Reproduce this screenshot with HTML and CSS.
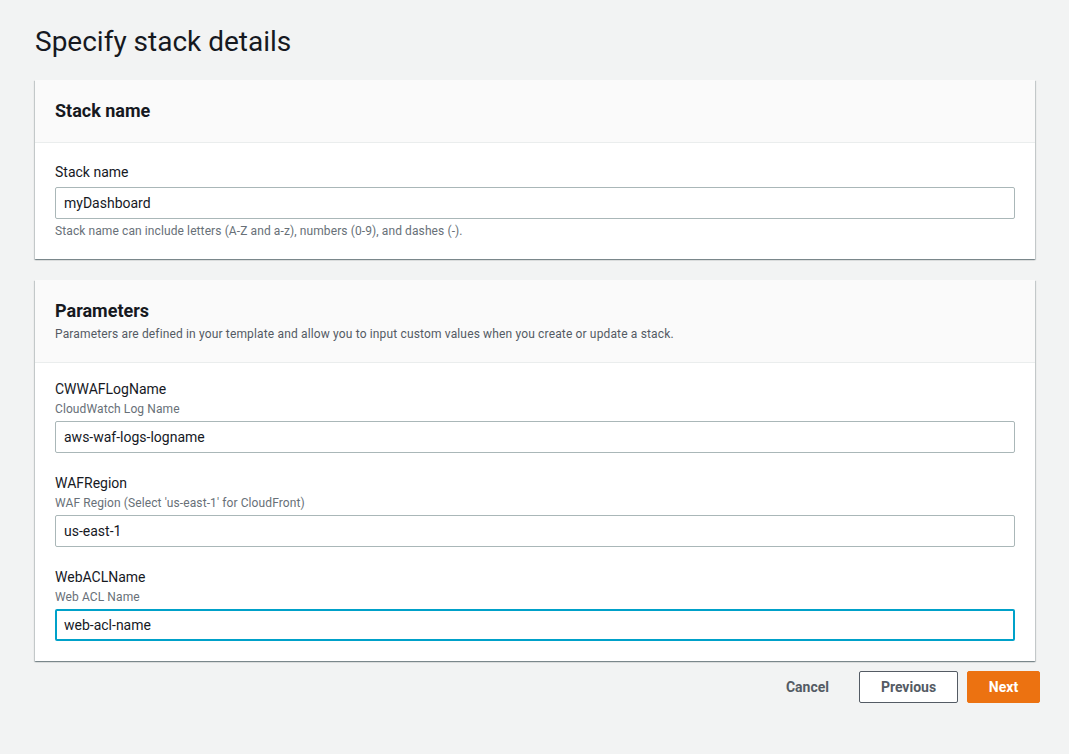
FILE: index.html
```html
<!DOCTYPE html>
<html lang="en">
<head>
<meta charset="utf-8">
<title>Specify stack details</title>
<link rel="stylesheet" href="styles.css">
</head>
<body>
<main class="page">
  <h1 class="page-title">Specify stack details</h1>

  <section class="card">
    <header class="card-header">
      <h2 class="card-title">Stack name</h2>
    </header>
    <div class="card-body">
      <div class="field">
        <label class="field-label" for="stackName">Stack name</label>
        <input class="field-input first" id="stackName" type="text" value="myDashboard">
        <p class="field-hint">Stack name can include letters (A-Z and a-z), numbers (0-9), and dashes (-).</p>
      </div>
    </div>
  </section>

  <section class="card">
    <header class="card-header">
      <h2 class="card-title">Parameters</h2>
      <p class="card-desc">Parameters are defined in your template and allow you to input custom values when you create or update a stack.</p>
    </header>
    <div class="card-body params">
      <div class="field">
        <label class="field-label" for="p1">CWWAFLogName</label>
        <p class="field-desc">CloudWatch Log Name</p>
        <input class="field-input" id="p1" type="text" value="aws-waf-logs-logname">
      </div>
      <div class="field">
        <label class="field-label" for="p2">WAFRegion</label>
        <p class="field-desc">WAF Region (Select 'us-east-1' for CloudFront)</p>
        <input class="field-input" id="p2" type="text" value="us-east-1">
      </div>
      <div class="field">
        <label class="field-label" for="p3">WebACLName</label>
        <p class="field-desc">Web ACL Name</p>
        <input class="field-input is-focused" id="p3" type="text" value="web-acl-name">
      </div>
    </div>
  </section>

  <div class="actions">
    <button class="btn btn-link" type="button">Cancel</button>
    <button class="btn btn-normal" type="button">Previous</button>
    <button class="btn btn-primary" type="button">Next</button>
  </div>
</main>
</body>
</html>
```

FILE: styles.css
```css
* { box-sizing: border-box; }

html, body {
  margin: 0;
  padding: 0;
  background: #f2f3f3;
  font-family: Roboto, "Liberation Sans", Arial, sans-serif;
  color: #16191f;
}

.page {
  width: 1000px;
  margin-left: 35px;
  padding-top: 24px;
}

.page-title {
  margin: 0 0 20px 0;
  font-size: 28px;
  line-height: 36px;
  font-weight: 400;
  color: #16191f;
}

.card {
  background: #ffffff;
  box-shadow: 0 1px 1px 0 rgba(0, 28, 36, 0.3), 1px 1px 1px 0 rgba(0, 28, 36, 0.15), -1px 1px 1px 0 rgba(0, 28, 36, 0.15);
  margin-bottom: 21px;
}

.card-header {
  background: #fafafa;
  border-bottom: 1px solid #eaeded;
  padding: 20px;
}

.card-title {
  margin: 0;
  font-size: 18px;
  line-height: 22px;
  font-weight: 700;
}

.card-desc {
  margin: 4px 0 0;
  font-size: 12px;
  line-height: 16px;
  letter-spacing: 0.15px;
  color: #545b64;
}

.card-body {
  padding: 19px 20px 20px;
}

.params {
  display: flex;
  flex-direction: column;
  gap: 20px;
  padding-top: 16px;
}

.field {
  display: flex;
  flex-direction: column;
}

.field-label {
  font-size: 14px;
  line-height: 20px;
  color: #16191f;
}

.field-desc {
  margin: 2px 0 0;
  font-size: 12px;
  line-height: 16px;
  letter-spacing: 0.1px;
  color: #687078;
}

.field-input {
  margin-top: 4px;
  height: 32px;
  width: 100%;
  border: 1px solid #aab7b8;
  border-radius: 2px;
  padding: 0 8px;
  font-family: inherit;
  font-size: 14px;
  color: #16191f;
  background: #ffffff;
  outline: none;
}

.field-input.first {
  margin-top: 5px;
}

.field-input.is-focused {
  border: 2px solid #00a1c9;
  padding: 0 7px;
}

.field-hint {
  margin: 4px 0 0;
  font-size: 12px;
  line-height: 16px;
  letter-spacing: 0.1px;
  color: #687078;
}

.card:last-of-type {
  margin-bottom: 0;
}

.actions {
  display: flex;
  justify-content: flex-end;
  gap: 9px;
  margin-top: 10px;
  margin-right: -5px;
}

.btn {
  height: 32px;
  padding: 0 20px;
  font-family: inherit;
  font-size: 14px;
  font-weight: 700;
  border-radius: 2px;
  border: 1px solid transparent;
  background: transparent;
  color: #545b64;
  cursor: pointer;
}

.btn-normal {
  width: 99px;
  background: #ffffff;
  border-color: #545b64;
}

.btn-primary {
  width: 73px;
  background: #ec7211;
  border-color: #ec7211;
  color: #ffffff;
}
```
